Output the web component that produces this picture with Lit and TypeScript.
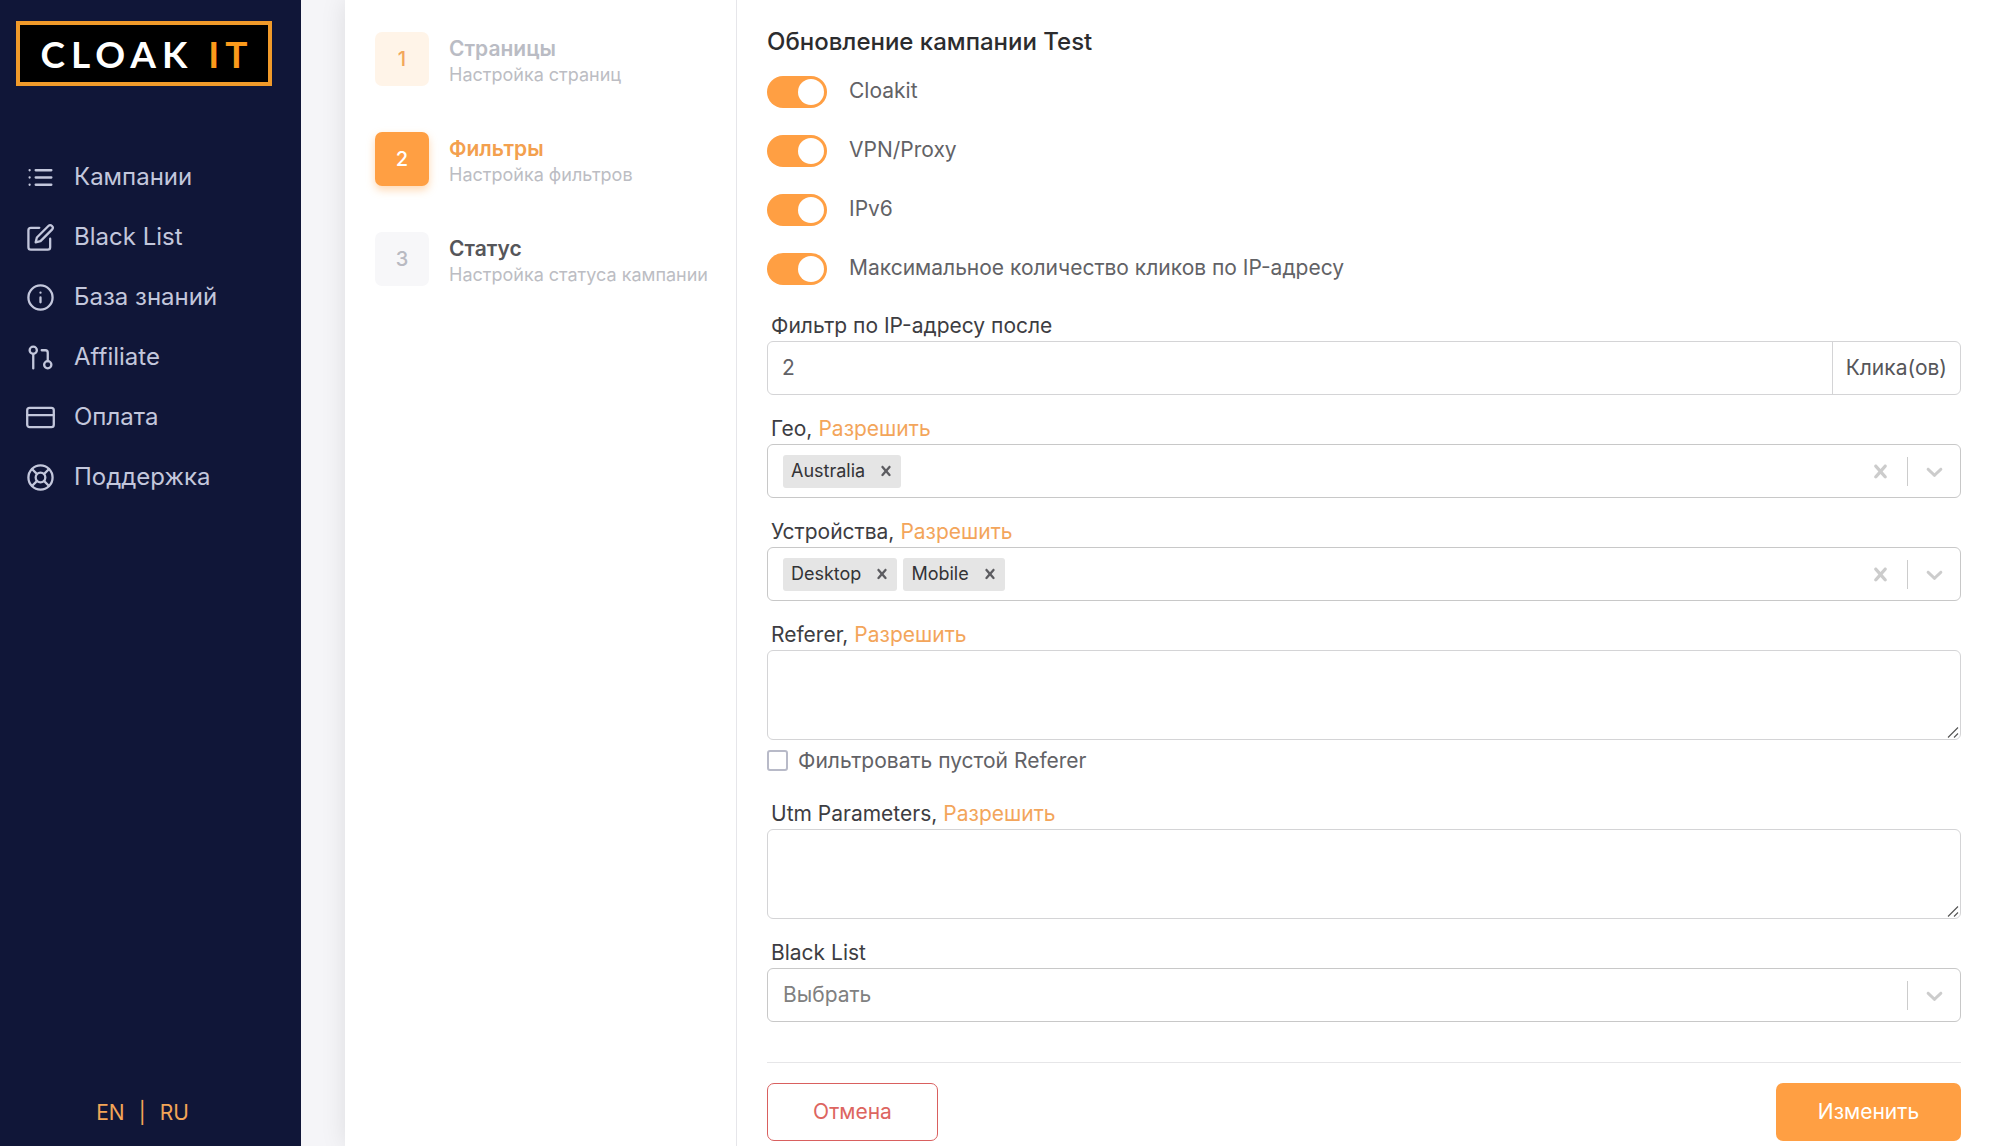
import { LitElement, html, svg, css, nothing } from "lit";
import { customElement, property, state } from "lit/decorators.js";
import { classMap } from "lit/directives/class-map.js";

const NAV = [
  { id: "list", label: "Кампании" },
  { id: "edit", label: "Black List" },
  { id: "info", label: "База знаний" },
  { id: "pull", label: "Affiliate" },
  { id: "card", label: "Оплата" },
  { id: "buoy", label: "Поддержка" },
];

const STEPS = [
  { title: "Страницы", note: "Настройка страниц", kind: "done" },
  { title: "Фильтры", note: "Настройка фильтров", kind: "active" },
  { title: "Статус", note: "Настройка статуса кампании", kind: "next" },
];

const TOGGLES = [
  { id: "cloakit", label: "Cloakit" },
  { id: "vpn", label: "VPN/Proxy" },
  { id: "ipv6", label: "IPv6" },
  { id: "clicks", label: "Максимальное количество кликов по IP-адресу" },
];

const ICONS: Record<string, unknown> = {
  list: svg`<path d="M8 6h13M8 12h13M8 18h13M3 6h.01M3 12h.01M3 18h.01" />`,
  edit: svg`<path d="M11 4H4a2 2 0 0 0-2 2v14a2 2 0 0 0 2 2h14a2 2 0 0 0 2-2v-7" /><path d="M18.5 2.500a2.121 2.121 0 0 1 3 3L12 15l-4 1 1-4 9.500-9.500z" />`,
  info: svg`<circle cx="12" cy="12" r="10" /><path d="M12 16v-4M12 8h.01" />`,
  pull: svg`<circle cx="18" cy="18" r="3" /><circle cx="6" cy="6" r="3" /><path d="M13 6h3a2 2 0 0 1 2 2v7M6 9v12" />`,
  card: svg`<rect x="1" y="4" width="22" height="16" rx="2" /><path d="M1 10h22" />`,
  buoy: svg`<circle cx="12" cy="12" r="10" /><circle cx="12" cy="12" r="4" /><path d="M4.930 4.930l4.240 4.240M14.830 14.830l4.240 4.240M14.830 9.170l4.240-4.240M4.930 19.070l4.240-4.240" />`,
};

const CROSS =
  "M14.348 14.849c-0.469 0.469-1.229 0.469-1.697 0l-2.651-3.030-2.651 3.029c-0.469 0.469-1.229 0.469-1.697 0-0.469-0.469-0.469-1.229 0-1.697l2.758-3.150-2.759-3.152c-0.469-0.469-0.469-1.228 0-1.697s1.228-0.469 1.697 0l2.652 3.031 2.651-3.031c0.469-0.469 1.228-0.469 1.697 0s0.469 1.229 0 1.697l-2.758 3.152 2.758 3.150c0.469 0.469 0.469 1.229 0 1.698z";
const CHEVRON =
  "M4.516 7.548c0.436-0.446 1.043-0.481 1.576 0l3.908 3.747 3.908-3.747c0.533-0.481 1.141-0.446 1.574 0 0.436 0.445 0.408 1.197 0 1.615-0.406 0.418-4.695 4.502-4.695 4.502-0.217 0.223-0.502 0.335-0.787 0.335s-0.570-0.112-0.789-0.335c0 0-4.287-4.084-4.695-4.502s-0.436-1.170 0-1.615z";

const glyph = (d: string, cls: string) =>
  html`<svg class=${cls} viewBox="0 0 20 20" aria-hidden="true"><path d=${d} /></svg>`;

const base = css`
  :host,
  * {
    box-sizing: border-box;
  }
  button,
  input,
  select,
  textarea {
    font: inherit;
    color: inherit;
    margin: 0;
  }
  button {
    border: 0;
    padding: 0;
    background: none;
    cursor: pointer;
  }
  .glyph {
    display: block;
    width: 27px;
    height: 27px;
    fill: #cccccc;
  }
  .small {
    display: block;
    width: 20px;
    height: 20px;
    fill: #5c5c60;
  }
  .head {
    display: flex;
    align-items: baseline;
    gap: 6px;
    padding-left: 4px;
    height: 26px;
    line-height: 22px;
    color: #3d3d42;
  }
  .allow {
    color: #f3a55b;
  }
`;

@customElement("side-bar")
class SideBar extends LitElement {
  static styles = [
    base,
    css`
      :host {
        display: flex;
        flex-direction: column;
        width: 301px;
        flex: none;
        padding: 21px 16px 18px;
        background: #101638;
        color: #c3c7dc;
      }
      .logo {
        display: flex;
        align-items: center;
        justify-content: center;
        width: 256px;
        height: 65px;
        padding-left: 6px;
        border: 4px solid #f09a2a;
        background: #000;
        color: #fff;
        font: 700 37px/1 Lato, sans-serif;
        letter-spacing: 6px;
        white-space: pre;
        text-decoration: none;
      }
      .it {
        color: #fb9a1b;
      }
      nav {
        display: flex;
        flex-direction: column;
        margin-top: 61px;
      }
      .item {
        display: flex;
        align-items: center;
        gap: 19px;
        height: 60px;
        padding-left: 10px;
        color: inherit;
        text-decoration: none;
        font-size: 24px;
      }
      .icon {
        width: 29px;
        height: 29px;
        flex: none;
        fill: none;
        stroke: currentColor;
        stroke-width: 1.900;
        stroke-linecap: round;
        stroke-linejoin: round;
      }
      .langs {
        display: flex;
        justify-content: center;
        gap: 14px;
        margin-top: auto;
        padding-right: 16px;
        line-height: 30px;
        color: #f3a557;
      }
    `,
  ];

  render() {
    return html`
      <a class="logo" href="#"><span>CLOAK </span><span class="it">IT</span></a>
      <nav>
        ${NAV.map(
          (n) => html`<a class="item" href="#${n.id}">
            <svg class="icon" viewBox="0 0 24 24" aria-hidden="true">${ICONS[n.id]}</svg>
            <span>${n.label}</span>
          </a>`
        )}
      </nav>
      <div class="langs"><button>EN</button><span>|</span><button>RU</button></div>
    `;
  }
}

@customElement("step-list")
class StepList extends LitElement {
  static styles = [
    base,
    css`
      :host {
        display: flex;
        flex-direction: column;
        gap: 46px;
        width: 392px;
        flex: none;
        padding: 32px 0 0 30px;
        border-right: 1px solid #e6e6ea;
      }
      .step {
        display: flex;
        gap: 20px;
        height: 54px;
        text-align: left;
        white-space: nowrap;
      }
      .badge {
        width: 54px;
        height: 54px;
        flex: none;
        border-radius: 7px;
        text-align: center;
        line-height: 54px;
        font-size: 20px;
        font-weight: 500;
        background: #f7f7f9;
        color: #b9bac2;
      }
      .text {
        display: flex;
        flex-direction: column;
        padding-top: 4px;
        line-height: 26px;
      }
      .title {
        font-weight: 600;
        color: #56565a;
      }
      .note {
        font-size: 18px;
        color: #bcbdc3;
      }
      .done .badge {
        background: #fff4e8;
        color: #f2a75c;
      }
      .done .title {
        color: #babcc4;
      }
      .active .badge {
        background: #ff9f43;
        color: #fff;
        box-shadow: 0 4px 8px rgba(255, 159, 67, 0.4);
      }
      .active .title {
        color: #f3a04e;
      }
    `,
  ];

  render() {
    return STEPS.map(
      (s, i) => html`<button class="step ${s.kind}">
        <span class="badge">${i + 1}</span>
        <span class="text"><span class="title">${s.title}</span><span class="note">${s.note}</span></span>
      </button>`
    );
  }
}

@customElement("tag-select")
class TagSelect extends LitElement {
  @property() label = "";
  @property({ attribute: false }) tags: string[] = [];

  static styles = [
    base,
    css`
      :host {
        display: block;
      }
      .box {
        display: flex;
        align-items: center;
        height: 54px;
        border: 1px solid #c8c8c8;
        border-radius: 6px;
        padding-left: 15px;
      }
      .tag {
        display: flex;
        align-items: center;
        height: 33px;
        margin-right: 6px;
        padding: 0 5px 0 8px;
        gap: 11px;
        border-radius: 3px;
        background: #e5e5e5;
        color: #333336;
        font-size: 18px;
      }
      .entry {
        flex: 1;
        min-width: 0;
        border: 0;
        outline: 0;
        background: none;
      }
      .bar {
        width: 1px;
        height: 29px;
        margin: 0 13px;
        background: #cccccc;
      }
      .open {
        margin-right: 12px;
      }
    `,
  ];

  render() {
    return html`
      <div class="head"><label for="entry">${this.label},</label><button class="allow">Разрешить</button></div>
      <div class="box">
        ${this.tags.map(
          (t) => html`<span class="tag"
            >${t}<button aria-label="Удалить ${t}" @click=${() => (this.tags = this.tags.filter((x) => x !== t))}>
              ${glyph(CROSS, "small")}
            </button></span
          >`
        )}
        <input id="entry" class="entry" type="text" />
        <button aria-label="Очистить" @click=${() => (this.tags = [])}>${glyph(CROSS, "glyph")}</button>
        <span class="bar"></span>
        <button class="open" aria-label="Открыть">${glyph(CHEVRON, "glyph")}</button>
      </div>
    `;
  }
}

@customElement("filter-form")
class FilterForm extends LitElement {
  @state() private on: Record<string, boolean> = { cloakit: true, vpn: true, ipv6: true, clicks: true };

  static styles = [
    base,
    css`
      :host {
        display: block;
        flex: 1;
        min-width: 0;
        padding: 27px 28px 5px 30px;
      }
      h1 {
        margin: 0;
        font-size: 24px;
        line-height: 30px;
        font-weight: 500;
        color: #2c2c2e;
      }
      .toggles {
        display: flex;
        flex-direction: column;
        gap: 27px;
        margin: 19px 0 30px;
      }
      .toggle {
        display: flex;
        align-items: center;
        gap: 22px;
        height: 32px;
        line-height: 30px;
        color: #626266;
      }
      .toggle label {
        align-self: flex-start;
      }
      .switch {
        appearance: none;
        display: flex;
        align-items: center;
        width: 60px;
        height: 32px;
        padding: 0 3px;
        border-radius: 16px;
        background: #e2e2e2;
      }
      .switch::before {
        content: "";
        width: 26px;
        height: 26px;
        border-radius: 50%;
        background: #fff;
      }
      .switch.on {
        justify-content: flex-end;
        background: #ff9f43;
      }
      .fields {
        display: flex;
        flex-direction: column;
        gap: 23px;
      }
      .group {
        display: flex;
        height: 54px;
        border: 1px solid #d4d4d6;
        border-radius: 6px;
      }
      .group input {
        flex: 1;
        min-width: 0;
        padding: 0 14px;
        border: 0;
        outline: 0;
        background: none;
        color: #626266;
      }
      .unit {
        padding: 0 13px;
        border-left: 1px solid #d4d4d6;
        line-height: 52px;
        color: #56565a;
      }
      textarea {
        display: block;
        width: 100%;
        height: 90px;
        padding: 12px 14px;
        border: 1px solid #d4d4d6;
        border-radius: 6px;
        background: #fff;
        outline: 0;
        resize: vertical;
      }
      textarea::-webkit-resizer {
        background: url("data:image/svg+xml,%3Csvg xmlns='http://www.w3.org/2000/svg' width='15' height='15'%3E%3Cpath d='M3 13.500L13 3.500M9 13.500L13 9.500' stroke='%23555' stroke-width='1.100'/%3E%3C/svg%3E")
          right bottom no-repeat;
      }
      .check {
        display: flex;
        align-items: center;
        gap: 10px;
        margin: 10px 0 9px;
        height: 21px;
        color: #626266;
      }
      .tick {
        appearance: none;
        width: 21px;
        height: 21px;
        border: 2px solid #b8bac8;
        border-radius: 3px;
      }
      .tick:checked {
        background: #ff9f43;
      }
      .picker {
        display: grid;
        grid-template-columns: 1fr auto;
        align-items: center;
        height: 54px;
        border: 1px solid #c8c8c8;
        border-radius: 6px;
      }
      .picker select {
        grid-area: 1 / 1 / 2 / 3;
        appearance: none;
        width: 100%;
        height: 52px;
        padding: 0 15px;
        border: 0;
        outline: 0;
        background: none;
        color: #808080;
      }
      .marks {
        grid-area: 1 / 2;
        display: flex;
        align-items: center;
        gap: 13px;
        padding-right: 12px;
        pointer-events: none;
      }
      .bar {
        width: 1px;
        height: 29px;
        background: #cccccc;
      }
      .actions {
        display: flex;
        justify-content: space-between;
        margin-top: 40px;
        padding-top: 20px;
        border-top: 1px solid #e6e6e8;
      }
      .btn {
        height: 58px;
        border-radius: 7px;
      }
      .cancel {
        width: 171px;
        border: 1px solid #d9605f;
        color: #dd6560;
      }
      .save {
        width: 185px;
        background: #ff9f43;
        color: #fff;
      }
    `,
  ];

  private area(id: string, label: string, check?: string) {
    return html`<div>
      <div class="head"><label for=${id}>${label},</label><button class="allow">Разрешить</button></div>
      <textarea id=${id}></textarea>
      ${check
        ? html`<div class="check"><input class="tick" type="checkbox" id="empty" /><label for="empty">${check}</label></div>`
        : nothing}
    </div>`;
  }

  render() {
    return html`
      <h1>Обновление кампании Test</h1>
      <div class="toggles">
        ${TOGGLES.map(
          (t) => html`<div class="toggle">
            <input
              id=${t.id}
              type="checkbox"
              role="switch"
              class=${classMap({ switch: true, on: this.on[t.id] })}
              .checked=${this.on[t.id]}
              @change=${() => (this.on = { ...this.on, [t.id]: !this.on[t.id] })}
            />
            <label for=${t.id}>${t.label}</label>
          </div>`
        )}
      </div>
      <div class="fields">
        <div>
          <div class="head"><label for="after">Фильтр по IP-адресу после</label></div>
          <div class="group"><input id="after" type="text" value="2" /><span class="unit">Клика(ов)</span></div>
        </div>
        <tag-select label="Гео" .tags=${["Australia"]}></tag-select>
        <tag-select label="Устройства" .tags=${["Desktop", "Mobile"]}></tag-select>
        ${this.area("referer", "Referer", "Фильтровать пустой Referer")}
        ${this.area("utm", "Utm Parameters")}
        <div>
          <div class="head"><label for="black">Black List</label></div>
          <div class="picker">
            <select id="black"><option>Выбрать</option></select>
            <span class="marks"><span class="bar"></span>${glyph(CHEVRON, "glyph")}</span>
          </div>
        </div>
      </div>
      <div class="actions">
        <button class="btn cancel">Отмена</button>
        <button class="btn save">Изменить</button>
      </div>
    `;
  }
}

@customElement("app-root")
class AppRoot extends LitElement {
  static styles = css`
    :host {
      display: flex;
      min-height: 100vh;
      background: #f5f5f8;
      font: 400 21px/26px Inter, "Open Sans", sans-serif;
    }
    main {
      flex: 1;
      min-width: 0;
      display: flex;
      margin-left: 44px;
      background: #fff;
      box-shadow: 0 0 24px rgba(0, 0, 0, 0.1);
      clip-path: inset(0 0 0 -44px);
    }
  `;

  render() {
    return html`
      <side-bar></side-bar>
      <main>
        <step-list></step-list>
        <filter-form></filter-form>
      </main>
    `;
  }
}
